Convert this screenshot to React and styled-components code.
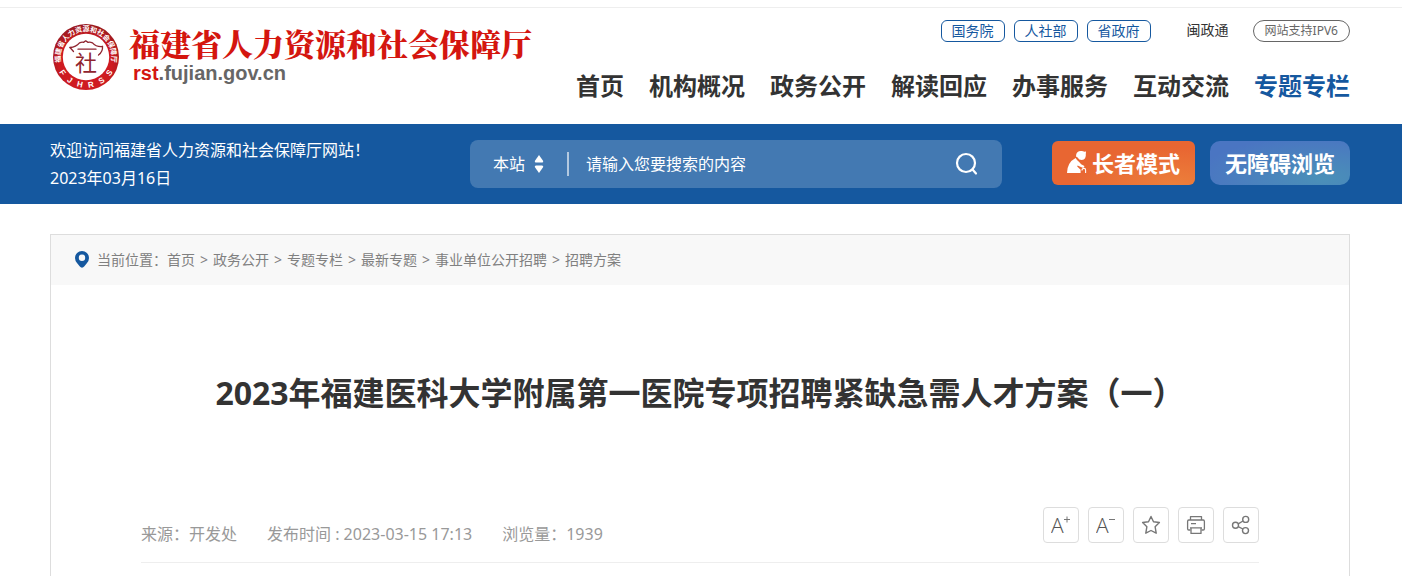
import React from 'react';
import styled, { createGlobalStyle } from 'styled-components';

const GlobalStyle = createGlobalStyle`
  *, *::before, *::after {
    box-sizing: border-box;
  }
  body {
    margin: 0;
    background: #fff;
    color: #333;
    font-family: "Noto Sans", "Noto Sans CJK SC", sans-serif;
    font-size: 16px;
  }
  a {
    color: inherit;
    text-decoration: none;
  }
  button, select, input {
    font: inherit;
    color: inherit;
  }
`;

const Container = styled.div`
  padding: 0 52px 0 50px;
`;

const TopLine = styled.div`
  height: 8px;
  border-bottom: 1px solid #eee;
`;

const HeaderInner = styled(Container)`
  display: flex;
  justify-content: space-between;
  align-items: flex-start;
  padding-top: 12px;
  padding-bottom: 20px;
`;

const Logo = styled.a`
  display: flex;
  gap: 10px;
  padding: 4px 0 0 3px;
`;

const LogoName = styled.strong`
  display: block;
  font-family: "Noto Serif CJK SC", "Noto Sans CJK SC", serif;
  font-size: 31px;
  font-weight: 900;
  line-height: 38px;
  color: #d4160f;
  white-space: nowrap;
`;

const LogoDomain = styled.span`
  display: block;
  padding-left: 4px;
  font-family: "Liberation Sans", Arial, sans-serif;
  font-size: 20px;
  font-weight: 700;
  line-height: 22px;
  color: #666;

  em {
    font-style: normal;
    color: #d4160f;
  }
`;

const HeaderSide = styled.div`
  display: flex;
  flex-direction: column;
  align-items: flex-end;
  gap: 26px;
`;

const QuickLinks = styled.div`
  display: flex;
  gap: 9px;
  font-size: 14px;
  line-height: 20px;
`;

const QuickLink = styled.a`
  padding: 0 10px;
  border: 1px solid #15589f;
  border-radius: 6px;
  color: #15589f;
`;

const PlainLink = styled.a`
  margin: 0 15px 0 27px;
`;

const Ipv6 = styled.span`
  padding: 0 11px;
  border: 1px solid #666;
  border-radius: 11px;
  font-size: 12px;
  color: #666;
`;

const Nav = styled.nav`
  display: flex;
  gap: 25px;
  font-size: 24px;
  font-weight: 700;
  line-height: 36px;
  white-space: nowrap;
`;

const NavLink = styled.a`
  color: ${({ $active }) => ($active ? '#15589f' : '#333')};
`;

const Banner = styled.div`
  background: #15589f;
  color: #fff;
`;

const BannerInner = styled(Container)`
  display: flex;
  align-items: center;
  min-height: 80px;
`;

const Welcome = styled.div`
  flex: 420 1 420px;
  line-height: 28px;
  white-space: nowrap;
`;

const SearchForm = styled.form`
  flex: 532 1 532px;
  display: flex;
  align-items: center;
  height: 48px;
  padding: 0 23px;
  border-radius: 8px;
  background: rgba(255, 255, 255, 0.2);
`;

const ScopeLabel = styled.label`
  display: flex;
  align-items: center;
  gap: 8px;
  padding-right: 23px;
  border-right: 2px solid rgba(255, 255, 255, 0.6);
  line-height: 24px;
`;

const ScopeSelect = styled.select`
  appearance: none;
  height: 24px;
  padding: 0;
  border: 0;
  background: transparent;
  outline: none;
`;

const SearchInput = styled.input`
  flex: 1;
  min-width: 0;
  height: 32px;
  padding: 0 17px;
  border: 0;
  background: transparent;
  outline: none;

  &::placeholder {
    color: #fff;
    opacity: 1;
  }
`;

const SearchButton = styled.button`
  display: flex;
  padding: 0;
  border: 0;
  background: transparent;
  cursor: pointer;
`;

const ModeButtons = styled.div`
  display: flex;
  gap: 15px;
  margin: 0 0 2px 50px;
`;

const ModeButton = styled.button`
  display: flex;
  align-items: center;
  gap: 5px;
  height: 44px;
  padding: 0 15px 2px;
  border: 0;
  border-radius: ${({ $elder }) => ($elder ? '6px' : '10px')};
  background: ${({ $elder }) =>
    $elder
      ? 'radial-gradient(ellipse at 85% 100%, #ec7f3b, #e86632 60%)'
      : 'radial-gradient(ellipse at 80% 85%, #4a90b8, #4a75c2 80%)'};
  color: #fff;
  font-size: 22px;
  font-weight: 700;
  white-space: nowrap;
  cursor: pointer;
`;

const Card = styled.main`
  margin-top: 30px;
  border: 1px solid #ddd;
  border-bottom: 0;
`;

const Breadcrumb = styled.nav`
  display: flex;
  align-items: center;
  height: 50px;
  padding: 0 24px 2px;
  background: #f8f8f8;
  color: #808080;
  font-size: 14px;

  svg {
    margin-right: 8px;
  }
`;

const Separator = styled.span`
  margin: 0 5px;
`;

const Article = styled.article`
  padding: 84px 90px 13px;
`;

const Title = styled.h1`
  margin: 0 -60px;
  font-size: 32px;
  font-weight: 700;
  line-height: 48px;
  text-align: center;
`;

const MetaBar = styled.div`
  display: flex;
  justify-content: space-between;
  margin-top: 90px;
  padding-bottom: 16px;
  border-bottom: 1px solid #eee;
`;

const MetaList = styled.div`
  display: flex;
  gap: 30px;
  padding-top: 15px;
  color: #999;
  line-height: 24px;
`;

const Tools = styled.div`
  display: flex;
  gap: 9px;
`;

const ToolButton = styled.button`
  display: flex;
  align-items: center;
  justify-content: center;
  width: 36px;
  height: 36px;
  padding: 0;
  border: 1px solid #ddd;
  border-radius: 4px;
  background: #fff;
  color: #777;
  cursor: pointer;
`;

const navItems = ['首页', '机构概况', '政务公开', '解读回应', '办事服务', '互动交流', '专题专栏'];
const quickLinks = ['国务院', '人社部', '省政府'];
const crumbs = ['首页', '政务公开', '专题专栏', '最新专题', '事业单位公开招聘', '招聘方案'];

const Seal = () => (
  <svg width="66" height="66" viewBox="0 0 66 66" aria-hidden="true">
    <defs>
      <radialGradient id="ring" cx="50%" cy="60%" r="60%">
        <stop offset="65%" stopColor="#cf1a20" />
        <stop offset="100%" stopColor="#971a20" />
      </radialGradient>
      <path id="arcTop" d="M8.4 39.6 A25.5 25.5 0 1 1 57.6 39.6" />
      <path id="arcBottom" d="M2.7 38 A30.7 30.7 0 0 0 63.3 38" />
    </defs>
    <circle cx="33" cy="33" r="33" fill="url(#ring)" />
    <circle cx="33" cy="33" r="23.2" fill="#fff" />
    <text fontSize="7" fontWeight="700" fill="#fff">
      <textPath href="#arcTop" startOffset="50%" textAnchor="middle">福建省人力资源和社会保障厅</textPath>
    </text>
    <text fontSize="8" fontWeight="700" fill="#fff" fontFamily="Liberation Sans, Arial, sans-serif">
      <textPath href="#arcBottom" startOffset="50%" textAnchor="middle">
        {'FJHRSS'.split('').join('\u00a0\u00a0\u00a0')}
      </textPath>
    </text>
    <g fill="none" stroke="#8f2530" strokeWidth="1.3" strokeLinecap="round" strokeLinejoin="round">
      <path d="M17 23.5 Q23 23 26.5 18.8 Q29 17.8 30.5 18.4 L32.7 16.8 L35 18.4 Q37 17.8 39.5 18.8 Q43 23 49.5 22.5" />
      <path d="M17 23.5 L20.5 27.5 M49.5 22.5 Q50 27.5 45.5 31 M25 25.2 H43" />
    </g>
    <text x="33" y="47" textAnchor="middle" fontSize="22" fontWeight="400" fill="#8f2530">社</text>
  </svg>
);

const UpDownIcon = () => (
  <svg width="10" height="18" viewBox="0 0 10 18" fill="#fff" aria-hidden="true">
    <path d="M5 0 L9.2 6 Q9.5 7.5 8 7.5 H2 Q.5 7.5 .8 6 Z" />
    <path d="M5 18 L9.2 12 Q9.5 10.5 8 10.5 H2 Q.5 10.5 .8 12 Z" />
  </svg>
);

const SearchIcon = () => (
  <svg width="24" height="24" viewBox="0 0 24 24" fill="none" stroke="#fff" strokeWidth="2.2" strokeLinecap="round" aria-hidden="true">
    <circle cx="11" cy="11" r="9" />
    <path d="M17.5 17.5 L21 21.5" />
  </svg>
);

const ElderIcon = () => (
  <svg width="20" height="24" viewBox="0 0 20 24" aria-hidden="true">
    <path
      fill="#fff"
      d="M9.2 4.4 Q10 1.2 13.6 1 Q16 .6 17.2 1.8 L19 1.6 L18.8 4 Q19.4 9.6 14.8 10 Q11.8 10 10.6 7.4 L9 6.4 Z"
    />
    <path
      fill="#fff"
      d="M8.6 8 Q10 10.6 12.4 12.2 Q13.4 14.2 17.4 16 Q17.2 18.2 15.6 17.8 L10.6 15.4 L10.2 16.6 L13.6 19.8 V23 H0 Q.2 12.4 8.6 8 Z"
    />
    <path d="M15 20.4 Q15 18.4 17 18.4 Q18.6 18.4 18.6 20 V23" fill="none" stroke="#fff" strokeWidth="1.1" />
  </svg>
);

const PinIcon = () => (
  <svg width="14" height="17" viewBox="0 0 14 17" aria-hidden="true">
    <path
      fill="#15589f"
      fillRule="evenodd"
      d="M7 0 A7 7 0 0 1 14 7 Q14 9.6 12 12 L9.4 15.3 Q7 18 4.6 15.3 L2 12 Q0 9.6 0 7 A7 7 0 0 1 7 0 Z M7 3.6 A3.2 3.2 0 1 0 7 10 A3.2 3.2 0 1 0 7 3.6 Z"
    />
  </svg>
);

const FontSizeIcon = ({ larger }) => (
  <svg width="20" height="32" viewBox="0 0 20 32" aria-hidden="true">
    <text x="0" y="24" fontSize="21" fontFamily="Open Sans, sans-serif" fontWeight="300" fill="#555">A</text>
    <path d={larger ? 'M13 10.5 H19 M16 7.5 V13.5' : 'M13 10.5 H19'} stroke="#777" fill="none" />
  </svg>
);

const StarIcon = () => (
  <svg width="20" height="20" viewBox="0 0 20 20" fill="none" stroke="currentColor" strokeWidth="1.4" strokeLinejoin="round" aria-hidden="true">
    <path d="M10 1.5 L12.5 6.8 L18.4 7.5 L14.1 11.7 L15.2 18.2 L10 15.5 L4.8 18.2 L5.9 11.7 L1.6 7.5 L7.5 6.8 Z" />
  </svg>
);

const PrintIcon = () => (
  <svg width="20" height="20" viewBox="0 0 20 20" fill="none" stroke="currentColor" strokeWidth="1.3" strokeLinejoin="round" aria-hidden="true">
    <path d="M4.5 5 V1.6 H15.5 V5" />
    <path d="M4.5 15 H2.8 Q1.6 15 1.6 13.8 V6.4 Q1.6 5 2.8 5 H17.2 Q18.4 5 18.4 6.4 V13.8 Q18.4 15 17.2 15 H15.5" />
    <path d="M4 12.8 H16 M5 12.8 V18.4 H15 V12.8 M5 8.6 H10" />
  </svg>
);

const ShareIcon = () => (
  <svg width="20" height="20" viewBox="0 0 20 20" fill="none" stroke="currentColor" strokeWidth="1.4" aria-hidden="true">
    <circle cx="4.5" cy="10.2" r="3" />
    <circle cx="14.7" cy="4.4" r="3" />
    <circle cx="14.5" cy="15.6" r="3" />
    <path d="M7.2 8.8 L12 6 M7.2 11.6 L11.9 14" />
  </svg>
);

const Header = () => (
  <header>
    <TopLine />
    <HeaderInner>
      <Logo href="#home">
        <Seal />
        <span>
          <LogoName>福建省人力资源和社会保障厅</LogoName>
          <LogoDomain><em>rst</em>.fujian.gov.cn</LogoDomain>
        </span>
      </Logo>
      <HeaderSide>
        <QuickLinks>
          {quickLinks.map(item => <QuickLink href="#gov" key={item}>{item}</QuickLink>)}
          <PlainLink href="#mzt">闽政通</PlainLink>
          <Ipv6>网站支持IPV6</Ipv6>
        </QuickLinks>
        <Nav>
          {navItems.map(item => (
            <NavLink href="#nav" key={item} $active={item === '专题专栏'}>{item}</NavLink>
          ))}
        </Nav>
      </HeaderSide>
    </HeaderInner>
  </header>
);

const SearchBanner = () => (
  <Banner>
    <BannerInner>
      <Welcome>
        <div>欢迎访问福建省人力资源和社会保障厅网站！</div>
        <div>2023年03月16日</div>
      </Welcome>
      <SearchForm onSubmit={e => e.preventDefault()}>
        <ScopeLabel>
          <ScopeSelect aria-label="搜索范围">
            <option>本站</option>
          </ScopeSelect>
          <UpDownIcon />
        </ScopeLabel>
        <SearchInput type="text" aria-label="搜索" placeholder="请输入您要搜索的内容" />
        <SearchButton type="submit" aria-label="搜索"><SearchIcon /></SearchButton>
      </SearchForm>
      <ModeButtons>
        <ModeButton type="button" $elder><ElderIcon />长者模式</ModeButton>
        <ModeButton type="button">无障碍浏览</ModeButton>
      </ModeButtons>
    </BannerInner>
  </Banner>
);

const App = () => (
  <>
    <GlobalStyle />
    <Header />
    <SearchBanner />
    <Container>
      <Card>
        <Breadcrumb>
          <PinIcon />
          <span>当前位置：</span>
          {crumbs.map((item, index) => (
            <React.Fragment key={item}>
              {index > 0 && <Separator>&gt;</Separator>}
              <a href="#crumb">{item}</a>
            </React.Fragment>
          ))}
        </Breadcrumb>
        <Article>
          <Title>2023年福建医科大学附属第一医院专项招聘紧缺急需人才方案（一）</Title>
          <MetaBar>
            <MetaList>
              <span>来源：开发处</span>
              <span>发布时间 : 2023-03-15 17:13</span>
              <span>浏览量：1939</span>
            </MetaList>
            <Tools>
              <ToolButton type="button" aria-label="放大字号"><FontSizeIcon larger /></ToolButton>
              <ToolButton type="button" aria-label="缩小字号"><FontSizeIcon /></ToolButton>
              <ToolButton type="button" aria-label="收藏"><StarIcon /></ToolButton>
              <ToolButton type="button" aria-label="打印"><PrintIcon /></ToolButton>
              <ToolButton type="button" aria-label="分享"><ShareIcon /></ToolButton>
            </Tools>
          </MetaBar>
        </Article>
      </Card>
    </Container>
  </>
);

export default App;
